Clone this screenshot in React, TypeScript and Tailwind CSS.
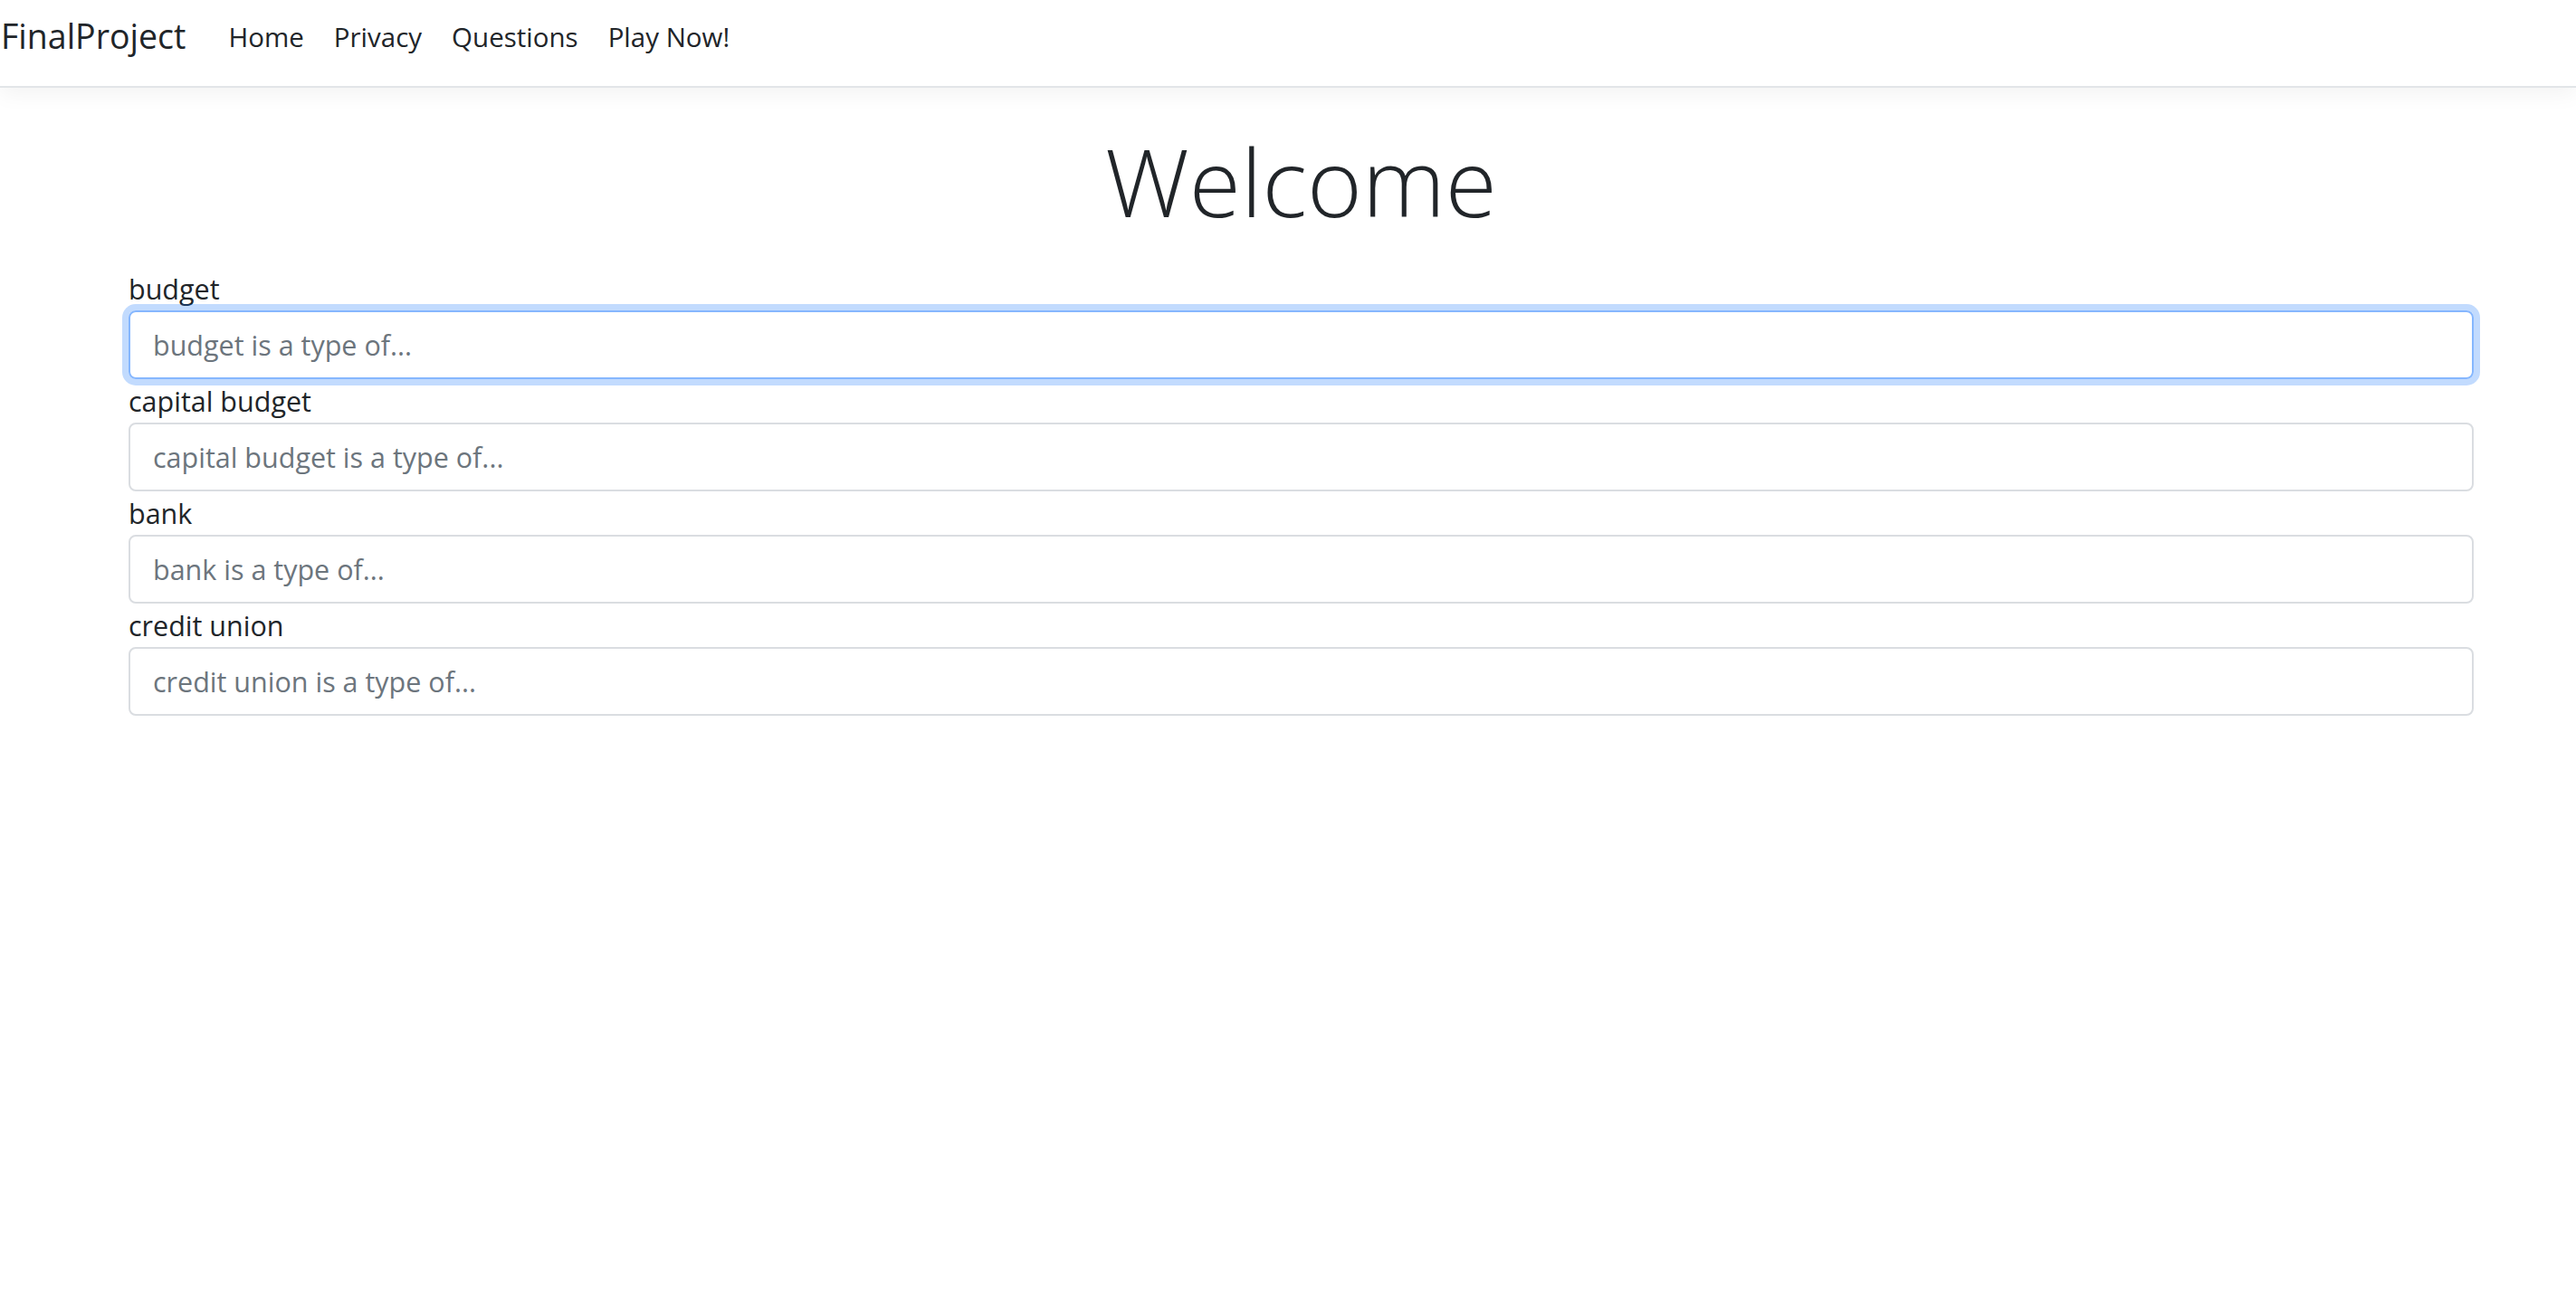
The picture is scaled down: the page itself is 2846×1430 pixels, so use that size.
import React from "react";

const fields = ["budget", "capital budget", "bank", "credit union"];

export default function App() {
  return (
    <div className="min-h-[1430px] bg-white text-[#212529] font-['Open_Sans','Noto_Sans',sans-serif]">
      <nav className="flex h-[97px] items-start border-b-2 border-[#e2e5e8] bg-white shadow-[0_7px_22px_rgba(0,0,0,0.05)]">
        <a className="ml-[1px] mt-[21px] text-[37.5px] leading-none text-[#212529]">FinalProject</a>
        <ul className="ml-[47px] mt-[26px] flex gap-[33px] text-[29.5px] leading-none">
          <li>Home</li>
          <li>Privacy</li>
          <li>Questions</li>
          <li>Play Now!</li>
        </ul>
      </nav>
      <main className="ml-[142px] w-[2591px]">
        <h1 className="mt-[51px] text-center text-[104px] font-light leading-none">Welcome</h1>
        <div className="mt-[43px] flex flex-col">
          {fields.map((f, i) => (
            <div key={f} className="flex flex-col">
              <label className="text-[30.5px] leading-[48px]">{f}</label>
              <input
                placeholder={`${f} is a type of...`}
                className={
                  "h-[76px] w-full rounded-[8px] border-2 px-[25px] text-[30.5px] text-[#212529] outline-none placeholder:text-[#6c757d] " +
                  (i === 0
                    ? "border-[#86b7fe] shadow-[0_0_0_7px_rgba(13,110,253,0.25)]"
                    : "border-[#dadde1]")
                }
              />
            </div>
          ))}
        </div>
      </main>
    </div>
  );
}
